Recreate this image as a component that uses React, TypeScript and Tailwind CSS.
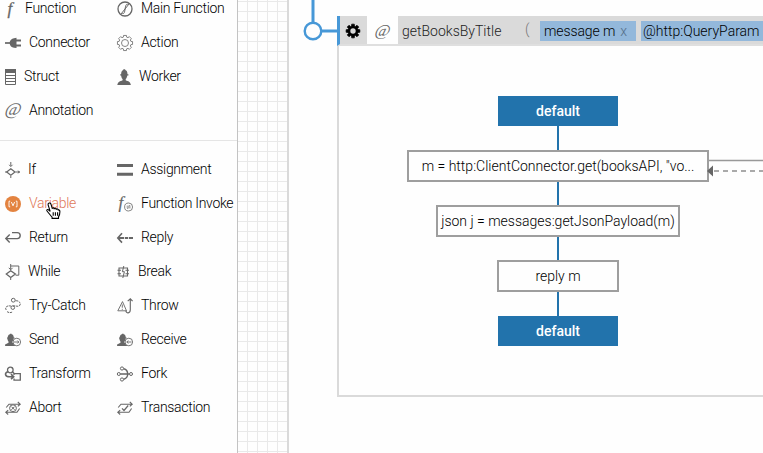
import React from "react";

type IconName = keyof typeof icons;

const gearPath = (cx: number, cy: number, inner: number, outer: number) => {
  const points: string[] = [];
  for (let i = 0; i < 8; i++) {
    const a = (i * Math.PI) / 4 - Math.PI / 2;
    [
      [-0.27, inner],
      [-0.19, outer],
      [0.19, outer],
      [0.27, inner],
    ].forEach(([d, r]) => points.push(`${(cx + Math.cos(a + d) * r).toFixed(2)},${(cy + Math.sin(a + d) * r).toFixed(2)}`));
  }
  return `M${points.join("L")}Z`;
};

const smallWorker = (
  <path
    d="M2 5.5h.7C2.8 3.5 3.6 2.5 5 2.3V1.8h1.6v.5C8 2.5 8.7 3.5 8.8 5.5h.7v1h-.9c-.1 1.5-.6 2.4-1.3 3v1.2l3 1.2V14H.1v-1.6l3.4-1.7V9.5c-.6-.6-1-1.5-1.1-3H2z"
    fill="#666"
    stroke="none"
  />
);

const swapArrows = (
  <path d="M1.2 7.5 4 4.2H14.8M12.8 2l2.4 2.2-2.4 2.2M14.6 8.5 12 12.3H1.2M3.2 10.1.8 12.3l2.4 2.2" strokeWidth="1.1" />
);

const icons = {
  function: (
    <text x="2.5" y="12.5" fontSize="17" fontStyle="italic" fontFamily="Liberation Serif, serif" fill="#666" stroke="#666" strokeWidth=".3">f</text>
  ),
  mainFunction: (
    <>
      <circle cx="8" cy="8" r="7" strokeWidth="1.3" />
      <path d="M10.7 3.5C8.9 2.8 8.6 5 8.1 8s-.8 5.2-2.8 4.5M4 13 12 3" />
    </>
  ),
  connector: (
    <>
      <path d="M0 8h5" strokeWidth="1.7" />
      <path d="M4.5 8C5 5 6.5 3.5 9 3.2l2.5-.5v10.4L9 12.8C6.5 12.5 5 11 4.5 8z" fill="#666" stroke="none" />
      <path d="M11 5.5h5M11 10.5h5" strokeWidth="2" />
    </>
  ),
  struct: (
    <>
      <path d="M0 0h11v4H0z" fill="#666" stroke="none" />
      <path d="M.5.5h10v15H.5zM.5 6.5h10M.5 9.5h10M.5 12.5h10" />
    </>
  ),
  annotation: (
    <text
      x="-1"
      y="12.3"
      transform="translate(3 0) skewX(-14)"
      fontSize="17.5"
      fontFamily="Liberation Serif, serif"
      fill="#666"
      stroke="none"
    >
      @
    </text>
  ),
  action: (
    <>
      <path d={gearPath(8, 8, 6.1, 7.7)} strokeWidth=".8" strokeLinejoin="round" />
      <circle cx="8" cy="8" r="3.5" strokeWidth=".8" />
    </>
  ),
  worker: (
    <path
      d="M3.2 5.2h.9C4.2 2.7 5 1.5 6.3 1V.2h1.9V1c1.5.5 2.2 1.7 2.3 4.2h.9v1.3h-1.1c-.2 1.5-.7 2.8-1.6 3.6v1.1c2.7 1.1 4.6 1.3 5.2 4.8H.3c.6-3.5 2.8-3.7 5.3-4.8v-1.1C4.7 9.3 4.3 8 4.1 6.5h-.9z"
      fill="#666"
      stroke="none"
    />
  ),
  if: (
    <>
      <path d="M5.8 0v3.8M5.8 14v2M0 10h2.3M10.5 10H15M4.2 2.8l1.6 1.8 1.7-1.8M12.8 8.8 14.5 10l-1.7 1.2" />
      <path d="M5.8 6.8 10 10l-4.2 3.3L1.7 10z" strokeWidth="1.2" />
    </>
  ),
  variable: (
    <>
      <circle cx="8" cy="8" r="8" fill="#e38340" stroke="none" />
      <path d="M5.2 5.2H4v5.6h1.2M10.8 5.2H12v5.6h-1.2M6.4 6 8 9.8 9.6 6" stroke="#fff" strokeWidth=".9" />
    </>
  ),
  return: <path d="M7 2.6h5.2a3 3 0 0 1 0 6H1M4.7 4.5.8 8.6l3.9 4" strokeWidth="1.4" />,
  assignment: <path d="M0 3.4h16M0 12.2h16" strokeWidth="3" />,
  functionInvoke: (
    <>
      <text x="1.5" y="12" fontSize="17" fontStyle="italic" fontFamily="Liberation Serif, serif" fill="#666" stroke="#666" strokeWidth=".2">f</text>
      <circle cx="11.6" cy="11" r="4" fill="#fefefe" strokeWidth=".8" />
      <path d="M9.6 10.2h3.7l-1-1M13.6 11.8H9.9l1 1" strokeWidth=".7" />
    </>
  ),
  reply: (
    <>
      <path d="M5 3.2.8 8 5 12.6" strokeWidth="1.6" />
      <path d="M1 8h15" strokeWidth="1.8" strokeDasharray="6 .8 3.3 .8" />
    </>
  ),
  while: (
    <>
      <path d="M5.7 0v5.5M5.7 14v2M5.7 2h8.1v9.2h-3.2M3.8 3.8l1.9 2 1.9-2" />
      <path d="M5.7 6.7 10.4 10l-4.7 3.5L1.3 10z" strokeWidth="1.3" />
    </>
  ),
  tryCatch: (
    <>
      <circle cx="8.3" cy="2.2" r="1.9" />
      <path d="M10.5 2.8c4.1-.6 6.2 3.5 3.6 5.2-2 .9-3.8-.8-6.2.2" strokeDasharray="2.5 .7" />
      <path d="M6 8.1C1.8 6.9-.8 10 1.5 12.2M2 13.5c1.2 1.3 4.2 1.5 5.5.3" strokeDasharray="2.3 .7" />
      <circle cx="7.8" cy="9.6" r="1.8" />
    </>
  ),
  send: (
    <>
      {smallWorker}
      <circle cx="11.8" cy="10" r="3.8" fill="#fefefe" strokeWidth=".9" />
      <path d="M9 10h4.8m-1.5-1.5L13.8 10l-1.5 1.5" strokeWidth=".9" />
    </>
  ),
  receive: (
    <>
      {smallWorker}
      <circle cx="11.8" cy="10" r="3.8" fill="#fefefe" strokeWidth=".9" />
      <path d="M14.5 10H9.8m1.5-1.5L9.8 10l1.5 1.5" strokeWidth=".9" />
    </>
  ),
  transform: (
    <>
      <circle cx="5.3" cy="4" r="2.8" strokeWidth="1.3" />
      <path d="M3 5.8C-1 6.8 0 10.8 4.8 10.8h3.5M6 8.2l2.7 2.6L6 13.2" strokeWidth="1.6" />
      <path d="M9 9V7.7h6.3v6.5H9v-1.6" strokeWidth="1.3" />
      <path d="M7.5 6.2l1.5 1" strokeWidth="1.5" />
    </>
  ),
  abort: (
    <>
      {swapArrows}
      <circle cx="8" cy="8.2" r="3.4" fill="#fefefe" />
      <path d="m6.4 6.6 3.2 3.2m0-3.2L6.4 9.8" />
    </>
  ),
  transaction: (
    <>
      {swapArrows}
      <path d="M5 8.3 7 10.5l4.2-5" strokeWidth="1.2" />
    </>
  ),
  break: (
    <>
      <path d="M2 4h8.5v8H2zM.5 6.2H4M.5 9.8H4M8.5 6.2H12M8.5 9.8H12" strokeWidth="1.1" />
      <path d="M6.8 2 5.4 7.7h2L5.8 14" strokeWidth="1" />
    </>
  ),
  throw: (
    <>
      <path d="M5.5 3.6.8 12.8h8.7zM5.3 6.5v3.2M5.3 10.8v1" strokeWidth=".9" />
      <path d="m10.7 3.2 2.6-2.4 2.3 2.4M13.3 1v10.8c0 4-4.2 4-4.4.8" strokeWidth="1.1" />
    </>
  ),
  fork: (
    <>
      <circle cx="5" cy="2.5" r="1.6" />
      <circle cx="1.8" cy="8" r="1.5" />
      <circle cx="14" cy="8" r="1.5" />
      <circle cx="5" cy="13.5" r="1.6" />
      <path d="M6.7 2.8C12 4.2 12 11.8 6.7 13.2M3.3 8h9" strokeWidth="1.4" />
    </>
  ),
};

interface Tool {
  icon: IconName;
  label: string;
  gap: string;
}

const Item = ({ icon, label, gap }: Tool) => (
  <div className="flex h-[34px] items-center">
    <svg viewBox="0 0 16 16" className="mt-0.5 h-4 w-4 shrink-0 overflow-visible" fill="none" stroke="#666" strokeWidth="1">
      {icons[icon]}
    </svg>
    <span className={`${gap} whitespace-nowrap ${icon === "variable" ? "text-[#df7858]" : "text-black"}`}>{label}</span>
  </div>
);

const Columns = ({ left, right }: { left: Tool[]; right: Tool[] }) => (
  <div className="grid grid-cols-[112px_1fr] pl-[5px]">
    <div>{left.map((t) => <Item key={t.label} {...t} />)}</div>
    <div>{right.map((t) => <Item key={t.label} {...t} />)}</div>
  </div>
);

const tool = (icon: IconName, label: string, gap = "ml-2"): Tool => ({ icon, label, gap });

const Cursor = () => (
  <svg viewBox="0 0 16 18" className="absolute left-[46px] top-[202px] h-[18px] w-4" fill="#fff" stroke="#000" strokeWidth="1.1">
    <path d="M3 1.1c1.2-.5 1.8.4 2.2 1.7l1 3.5c.8-.8 1.7-.4 2 .4.8-.8 1.7-.3 2 .5.9-.7 1.8-.2 2.1.8.9-.3 1.6.4 1.6 1.7 0 2.8-.4 3.6-1.4 5.2v1.5H6.1v-1.2C4.4 13.4 3.2 11.5 1 9c-.8-1.2.6-2 1.8-1l1.4 1.4L2.1 2.8C1.9 2 2.2 1.4 3 1.1z" />
    <path d="M7.2 10.3v3.5M9.4 10.3v3.5M11.6 10.3v3.5" />
  </svg>
);

const Palette = () => (
  <aside className="h-full w-[238px] shrink-0 overflow-hidden border-r border-[#c3c3c3] bg-[#fefefe] text-[14px] tracking-[-0.3px]">
    <div className="-mt-[9px]">
      <Columns
        left={[tool("function", "Function", "ml-1"), tool("connector", "Connector"), tool("struct", "Struct", "ml-[3px]"), tool("annotation", "Annotation")]}
        right={[tool("mainFunction", "Main Function"), tool("action", "Action"), tool("worker", "Worker", "ml-[6px]")]}
      />
    </div>
    <div className="mb-[11px] mt-[13px] h-px bg-[#e5e5e5]" />
    <Columns
      left={[
        tool("if", "If", "ml-[7px]"),
        tool("variable", "Variable"),
        tool("return", "Return"),
        tool("while", "While", "ml-[7px]"),
        tool("tryCatch", "Try-Catch"),
        tool("send", "Send"),
        tool("transform", "Transform"),
        tool("abort", "Abort"),
      ]}
      right={[
        tool("assignment", "Assignment"),
        tool("functionInvoke", "Function Invoke"),
        tool("reply", "Reply"),
        tool("break", "Break", "ml-[5px]"),
        tool("throw", "Throw"),
        tool("receive", "Receive"),
        tool("fork", "Fork"),
        tool("transaction", "Transaction"),
      ]}
    />
  </aside>
);

const Link = () => <div className="h-[25px] w-0.5 bg-[#2273ac]" />;

const Terminal = () => (
  <div className="flex h-[30px] w-[120px] items-center justify-center bg-[#2273ac] font-medium text-white">default</div>
);

const Statement = ({ width, children }: { width: string; children: React.ReactNode }) => (
  <div className={`relative z-10 -my-px flex h-8 ${width} items-center justify-center whitespace-nowrap border-2 border-[#9e9e9e] bg-[#fefefe] text-black`}>
    {children}
  </div>
);

const Header = () => (
  <div className="flex h-[30px] w-[426px] border-b-2 border-l-[3px] border-b-[#dfdfdf] border-l-[#4798d7] bg-[#dadada]">
    <div className="flex w-[27px] shrink-0 items-center pl-[5px]">
      <svg viewBox="0 0 16 16" className="mt-0.5 h-4 w-4">
        <path d={gearPath(8, 8, 5.2, 7)} stroke="#000" strokeWidth=".7" strokeLinejoin="round" />
        <circle cx="8" cy="8" r="2.7" fill="#dadada" />
      </svg>
    </div>
    <div className="flex w-[31px] shrink-0 items-center bg-[#fefefe] pl-2">
      <svg viewBox="0 0 16 16" className="mt-0.5 h-[15px] w-[15px] overflow-visible">{icons.annotation}</svg>
    </div>
    <span className="ml-1 mt-[5px] w-[123px] text-[#222]">getBooksByTitle</span>
    <span className="mt-[3px] w-[15px] text-[#777]">(</span>
    <div className="mt-[5px] flex h-5 w-24 shrink-0 items-center whitespace-nowrap bg-[#93b8db] pl-1 text-black">
      <span className="tracking-[-0.1px]">message m</span>
      <span className="ml-[5px] text-[#56708a]">x</span>
    </div>
    <div className="ml-[5px] mt-[5px] flex h-5 flex-1 items-center whitespace-nowrap bg-[#93b8db] pl-0.5 text-black">@http:QueryParam</div>
  </div>
);

const Connections = () => (
  <svg className="absolute left-full top-0 h-8 w-14 overflow-visible" fill="none">
    <path d="M2 8.5H56" stroke="#999" strokeWidth="1.4" />
    <path d="M7 19H56" stroke="#aaa" strokeWidth="2" strokeDasharray="5 4" />
    <path d="M0 19 6 13.5v11z" fill="#666" />
  </svg>
);

export default function App() {
  return (
    <div className="relative flex h-[453px] w-[763px] overflow-hidden bg-[#fefefe] font-['Roboto',sans-serif] text-[14px] font-light leading-5">
      <Palette />
      <div className="h-full w-[49px] shrink-0 bg-[linear-gradient(to_right,transparent_9px,#e9e9e9_9px),linear-gradient(to_bottom,transparent_9px,#e9e9e9_9px)] bg-[length:10px_10px] bg-[position:0_2px]" />
      <main className="flex h-full flex-1 border-l-2 border-[#dadada]">
        <svg className="h-[50px] w-12 shrink-0" fill="none" stroke="#4798d7" strokeWidth="3">
          <path d="M24 0v22M33 31h15" />
          <circle cx="24" cy="31" r="8.3" strokeWidth="2.4" />
        </svg>
        <section className="mt-4 w-[426px]">
          <Header />
          <div className="flex h-[351px] w-[426px] border-b-2 border-l-2 border-[#dadada] pl-[68px] pt-[50px]">
            <div className="flex w-[302px] flex-col items-center">
              <Terminal />
              <Link />
              <Statement width="w-[302px]">
                m = http:ClientConnector.get(booksAPI, "vo...
                <Connections />
              </Statement>
              <Link />
              <Statement width="w-[244px]">json j = messages:getJsonPayload(m)</Statement>
              <Link />
              <Statement width="w-[122px]">reply m</Statement>
              <Link />
              <Terminal />
            </div>
          </div>
        </section>
      </main>
      <Cursor />
    </div>
  );
}
